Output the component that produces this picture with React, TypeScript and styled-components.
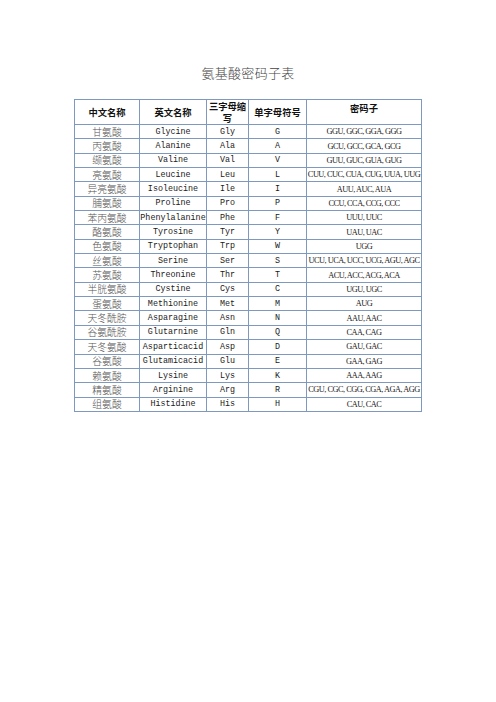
import React from 'react';
import styled, { createGlobalStyle } from 'styled-components';

const GlobalStyle = createGlobalStyle`
  html, body {
    margin: 0;
    padding: 0;
    background: #ffffff;
  }
`;

const Page = styled.div`
  width: 496px;
  height: 702px;
  box-sizing: border-box;
  padding-top: 65px;
  display: flex;
  flex-direction: column;
  align-items: flex-start;
`;

const Title = styled.h1`
  align-self: stretch;
  margin: 0 0 18px;
  text-align: center;
  font-family: "Noto Sans CJK SC", sans-serif;
  font-weight: 300;
  font-size: 13px;
  line-height: 16px;
  letter-spacing: 0.3px;
  color: #444;
`;

const Grid = styled.div`
  margin-left: 74px;
  display: grid;
  grid-template-columns: 65px 67px 42px 58px 115px;
  grid-template-rows: 25px;
  grid-auto-rows: 14.35px;
  border-top: 1px solid #7f98bd;
  border-left: 1px solid #7f98bd;
`;

const HeadCell = styled.div<{ $top?: boolean }>`
  box-sizing: border-box;
  border-right: 1px solid #7f98bd;
  border-bottom: 1px solid #7f98bd;
  display: flex;
  align-items: ${({ $top }) => ($top ? 'flex-start' : 'center')};
  justify-content: center;
  padding-top: ${({ $top }) => ($top ? '2px' : '0')};
  text-align: center;
  font-family: "Noto Sans CJK SC", sans-serif;
  font-weight: 700;
  font-size: 9.3px;
  line-height: 12px;
  color: #111;
`;

type Kind = 'zh' | 'mono' | 'codon';

const Cell = styled.div<{ $kind: Kind }>`
  box-sizing: border-box;
  border-right: 1px solid #7f98bd;
  border-bottom: 1px solid #7f98bd;
  display: flex;
  align-items: center;
  justify-content: center;
  white-space: nowrap;
  overflow: hidden;
  font-family: ${({ $kind }) =>
    $kind === 'zh'
      ? '"Noto Sans CJK SC", sans-serif'
      : $kind === 'mono'
        ? '"Liberation Mono", monospace'
        : '"Liberation Serif", serif'};
  font-size: ${({ $kind }) => ($kind === 'zh' ? '9.8px' : $kind === 'mono' ? '8.4px' : '8.3px')};
  font-weight: ${({ $kind }) => ($kind === 'zh' ? 300 : 400)};
  letter-spacing: ${({ $kind }) => ($kind === 'codon' ? '-0.5px' : '0')};
  color: ${({ $kind }) => ($kind === 'zh' ? '#555' : '#1a1a1a')};
`;

const rows: [string, string, string, string, string][] = [
  ['甘氨酸', 'Glycine', 'Gly', 'G', 'GGU, GGC, GGA, GGG'],
  ['丙氨酸', 'Alanine', 'Ala', 'A', 'GCU, GCC, GCA, GCG'],
  ['缬氨酸', 'Valine', 'Val', 'V', 'GUU, GUC, GUA, GUG'],
  ['亮氨酸', 'Leucine', 'Leu', 'L', 'CUU, CUC, CUA, CUG, UUA, UUG'],
  ['异亮氨酸', 'Isoleucine', 'Ile', 'I', 'AUU, AUC, AUA'],
  ['脯氨酸', 'Proline', 'Pro', 'P', 'CCU, CCA, CCG, CCC'],
  ['苯丙氨酸', 'Phenylalanine', 'Phe', 'F', 'UUU, UUC'],
  ['酪氨酸', 'Tyrosine', 'Tyr', 'Y', 'UAU, UAC'],
  ['色氨酸', 'Tryptophan', 'Trp', 'W', 'UGG'],
  ['丝氨酸', 'Serine', 'Ser', 'S', 'UCU, UCA, UCC, UCG, AGU, AGC'],
  ['苏氨酸', 'Threonine', 'Thr', 'T', 'ACU, ACC, ACG, ACA'],
  ['半胱氨酸', 'Cystine', 'Cys', 'C', 'UGU, UGC'],
  ['蛋氨酸', 'Methionine', 'Met', 'M', 'AUG'],
  ['天冬酰胺', 'Asparagine', 'Asn', 'N', 'AAU, AAC'],
  ['谷氨酰胺', 'Glutarnine', 'Gln', 'Q', 'CAA, CAG'],
  ['天冬氨酸', 'Asparticacid', 'Asp', 'D', 'GAU, GAC'],
  ['谷氨酸', 'Glutamicacid', 'Glu', 'E', 'GAA, GAG'],
  ['赖氨酸', 'Lysine', 'Lys', 'K', 'AAA, AAG'],
  ['精氨酸', 'Arginine', 'Arg', 'R', 'CGU, CGC, CGG, CGA, AGA, AGG'],
  ['组氨酸', 'Histidine', 'His', 'H', 'CAU, CAC'],
];

const kinds: Kind[] = ['zh', 'mono', 'mono', 'mono', 'codon'];

export default function App() {
  return (
    <>
      <GlobalStyle />
      <Page>
        <Title>氨基酸密码子表</Title>
        <Grid>
          <HeadCell>中文名称</HeadCell>
          <HeadCell>英文名称</HeadCell>
          <HeadCell>三字母缩<br />写</HeadCell>
          <HeadCell>单字母符号</HeadCell>
          <HeadCell $top>密码子</HeadCell>
          {rows.map((row) =>
            row.map((text, i) => (
              <Cell key={`${row[1]}-${i}`} $kind={kinds[i]}>
                {text}
              </Cell>
            )),
          )}
        </Grid>
      </Page>
    </>
  );
}
